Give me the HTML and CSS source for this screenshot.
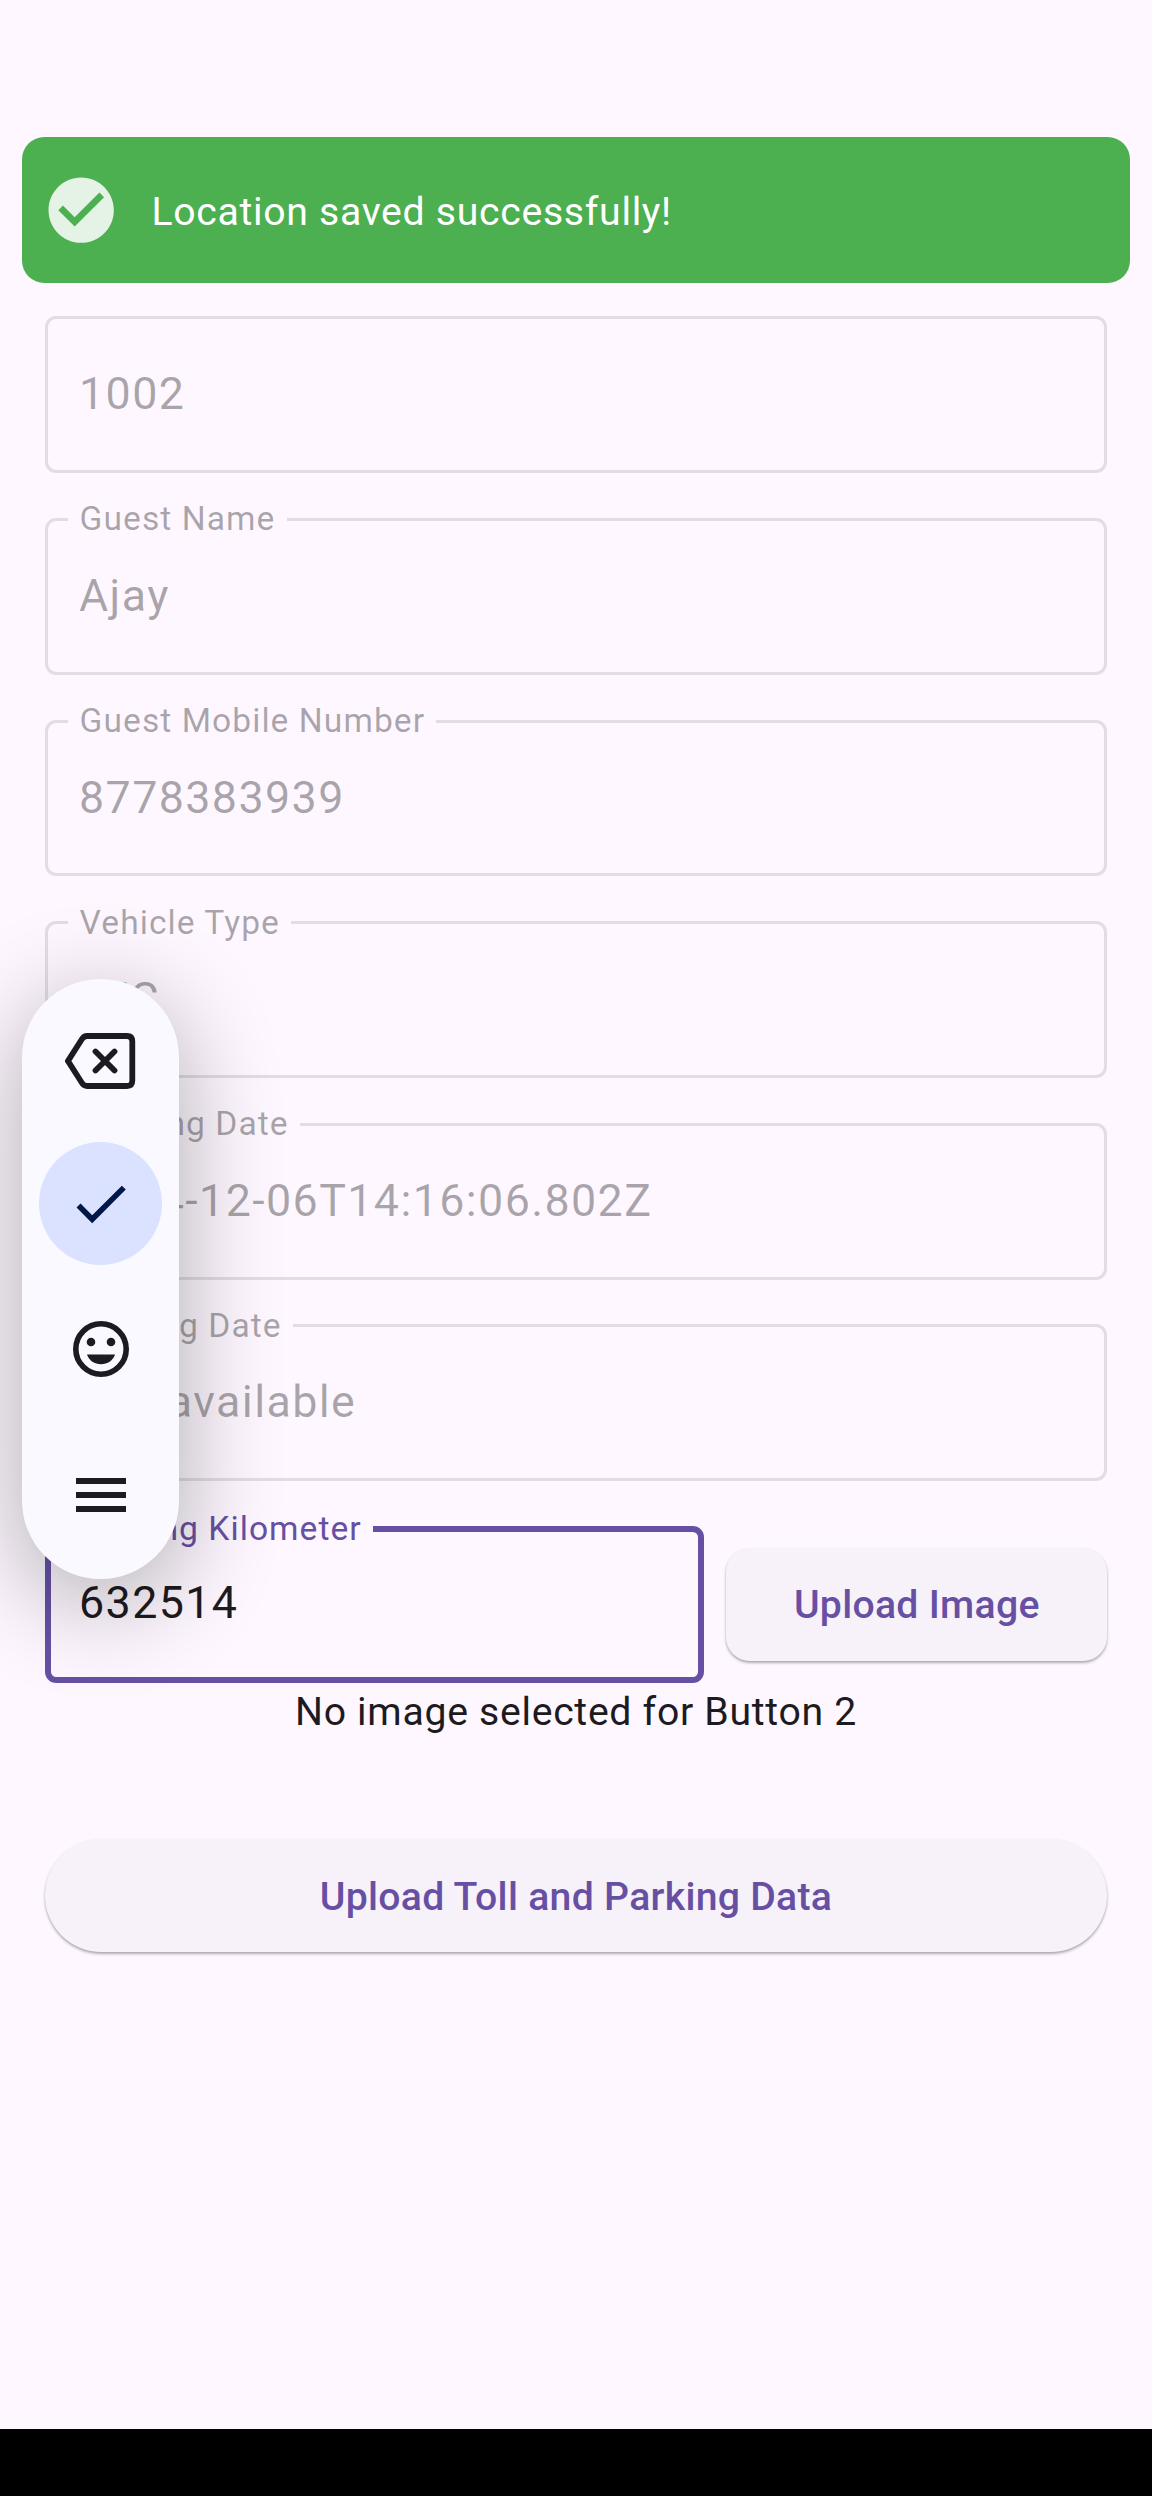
FILE: index.html
```html
<!DOCTYPE html>
<html lang="en">
<head>
<meta charset="utf-8">
<title>Trip details</title>
<link rel="stylesheet" href="styles.css">
</head>
<body>
<div class="screen">
  <div class="banner" role="status">
    <svg class="banner-icon" viewBox="0 0 24 24"><path d="M12 2C6.48 2 2 6.48 2 12s4.48 10 10 10 10-4.48 10-10S17.52 2 12 2zm-2 15l-5-5 1.41-1.41L10 14.17l7.590-7.590L19 8l-9 9z"/></svg>
    <span class="banner-text">Location saved successfully!</span>
  </div>

  <main class="form">
    <fieldset class="field"><div class="value">1002</div></fieldset>
    <fieldset class="field"><legend>Guest Name</legend><div class="value">Ajay</div></fieldset>
    <fieldset class="field"><legend>Guest Mobile Number</legend><div class="value">8778383939</div></fieldset>
    <fieldset class="field"><legend>Vehicle Type</legend><div class="value">A/C</div></fieldset>
    <fieldset class="field"><legend>Starting Date</legend><div class="value">2024-12-06T14:16:06.802Z</div></fieldset>
    <fieldset class="field"><legend>Closing Date</legend><div class="value">Not available</div></fieldset>
    <div class="row">
      <fieldset class="field focused"><legend>Closing Kilometer</legend><div class="value">632514</div></fieldset>
      <button class="button upload">Upload Image</button>
    </div>
  </main>
  <p class="hint">No image selected for Button 2</p>
  <button class="button submit">Upload Toll and Parking Data</button>
  <div class="navbar"></div>

  <div class="toolbar">
    <svg class="tool backspace" viewBox="0 0 72 56"><path d="M22 3H62Q67.300 3 67.300 8.500V47.500Q67.300 53 62 53H22Q19 53 17 50L3 28L17 6Q19 3 22 3Z"/><path d="M30.500 18.500L49.500 37.500M49.500 18.500L30.500 37.500"/></svg>
    <div class="confirm"><svg viewBox="0 0 24 24"><path d="M9 16.170L4.830 12l-1.420 1.410L9 19 21 7l-1.410-1.410z"/></svg></div>
    <svg class="tool smile" viewBox="0 0 56 56"><circle class="ring" cx="28" cy="28" r="25.200"/><circle cx="18" cy="21" r="4.300"/><circle cx="38" cy="21" r="4.300"/><path d="M14 33.500H42C40 39.500 34.500 43.300 28 43.300S16 39.500 14 33.500Z"/></svg>
    <div class="bars"><i></i><i></i><i></i></div>
  </div>
</div>
</body>
</html>
```
FILE: styles.css
```css
* { box-sizing: border-box; }

body {
  margin: 0;
  background: #fef7ff;
  font-family: Roboto, "Noto Sans", sans-serif;
  color: #1d1b20;
}

.screen {
  position: relative;
  display: flex;
  flex-direction: column;
  width: 1152px;
  height: 2496px;
  padding-top: 137.4px;
  overflow: hidden;
}

.banner {
  display: flex;
  align-items: center;
  gap: 31px;
  height: 145.600px;
  margin: 0 22.400px;
  padding-left: 19.600px;
  border-radius: 22.400px;
  background: #4caf50;
  color: #fff;
  font-size: 39.200px;
  letter-spacing: 0.700px;
}

.banner-text { padding-top: 3px; }

.banner-icon {
  width: 78.400px;
  height: 78.400px;
  fill: rgba(255, 255, 255, 0.85);
}

.form {
  display: flex;
  flex-direction: column;
  gap: 44.800px;
  margin: 33.400px 44.800px 0;
}

.field {
  height: 156.800px;
  min-width: 0;
  margin: 0;
  padding: 0 0 0 20.600px;
  border: 3px solid rgba(29, 27, 32, 0.12);
  border-radius: 11.200px;
  color: rgba(29, 27, 32, 0.38);
}

.field legend {
  height: 0;
  padding: 0 11.200px;
  font-size: 33.600px;
  line-height: 0;
  letter-spacing: 1.050px;
}

.value {
  padding-left: 10.600px;
  font-size: 44.800px;
  line-height: 149px;
  letter-spacing: 1.400px;
}

.row {
  display: flex;
  align-items: center;
  gap: 22.400px;
}

.focused {
  flex: 1;
  padding-left: 17.600px;
  border: 6px solid #6750a4;
  color: #6750a4;
}

.focused .value {
  color: #1d1b20;
  line-height: 142px;
}

.button {
  border: 0;
  background: #f7f2fa;
  color: #6750a4;
  font-family: inherit;
  font-size: 39.200px;
  font-weight: 500;
  letter-spacing: 0.280px;
  box-shadow: 0 2px 3px rgba(0, 0, 0, 0.28), 0 1px 2px rgba(0, 0, 0, 0.08);
}

.upload {
  width: 380.800px;
  height: 113px;
  padding-top: 3px;
  border-radius: 24px;
}

.hint {
  margin: 1.600px 0 0;
  font-size: 39.200px;
  line-height: 56px;
  letter-spacing: 0.700px;
  text-align: center;
}

.submit {
  height: 113px;
  margin: 98.600px 44.800px 0;
  padding-top: 4px;
  border-radius: 56.500px;
}

.navbar {
  height: 67.500px;
  margin-top: auto;
  background: #000;
}

/* Floating keyboard toolbar */
.toolbar {
  position: absolute;
  top: 979.300px;
  left: 22.400px;
  display: flex;
  flex-direction: column;
  align-items: center;
  width: 156.800px;
  height: 599.500px;
  padding-top: 53.800px;
  border-radius: 78.400px;
  background: #f9f9ff;
  box-shadow: 0 22px 100px rgba(0, 0, 0, 0.32);
}

.tool { flex: none; fill: #1b1b21; }

.backspace {
  width: 72px;
  height: 56px;
  fill: none;
  stroke: #1b1b21;
  stroke-width: 5.800;
  stroke-linecap: round;
}

.confirm {
  display: grid;
  place-items: center;
  flex: none;
  width: 123.200px;
  height: 123.200px;
  margin-top: 53px;
  border-radius: 50%;
  background: #dae2ff;
}

.confirm svg {
  width: 67.200px;
  height: 67.200px;
  fill: #001848;
}

.smile {
  width: 56px;
  height: 56px;
  margin-top: 56px;
}

.ring {
  fill: none;
  stroke: #1b1b21;
  stroke-width: 5.600;
}

.bars {
  display: flex;
  flex-direction: column;
  gap: 8px;
  width: 50.500px;
  margin-top: 100.500px;
}

.bars i { height: 6px; background: #1b1b21; }
```
